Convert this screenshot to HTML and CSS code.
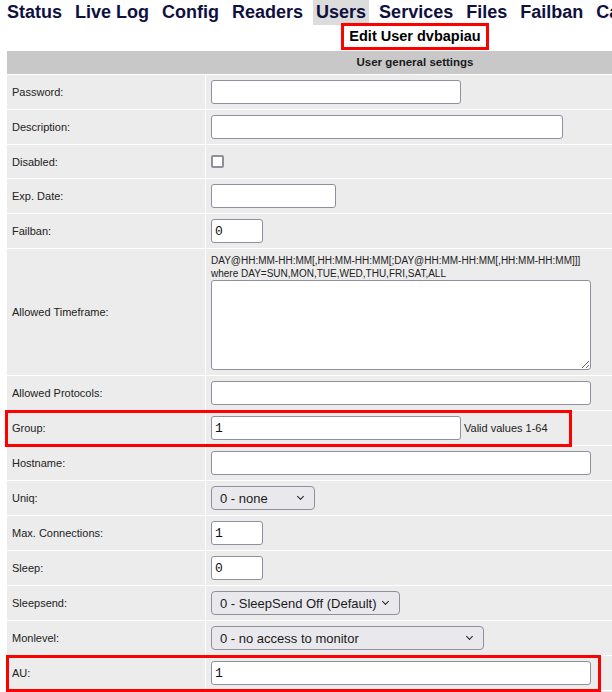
FILE: index.html
```html
<!DOCTYPE html>
<html lang="en">

<head>
    <meta charset="UTF-8">
    <meta name="viewport" content="width=device-width, initial-scale=1.0">
    <title>OSCam - Edit User</title>
    <link rel="stylesheet" href="styles.css">
</head>

<body>

    <ul id="menu">
        <li><a href="#">Status</a></li>
        <li><a href="#">Live Log</a></li>
        <li><a href="#">Config</a></li>
        <li><a href="#">Readers</a></li>
        <li class="active"><a href="#">Users</a></li>
        <li><a href="#">Services</a></li>
        <li><a href="#">Files</a></li>
        <li><a href="#">Failban</a></li>
        <li><a href="#">Cache</a></li>
        <li><a href="#">Script</a></li>
        <li><a href="#">Shutdown</a></li>
    </ul>

    <div class="page">
        <div class="title"><span>Edit User dvbapiau</span></div>

        <div class="config">
            <div class="head">User general settings</div>

            <div class="row">
                <div class="label">Password:</div>
                <div class="field"><input type="text" class="w250"></div>
            </div>
            <div class="row">
                <div class="label">Description:</div>
                <div class="field"><input type="text" class="w352"></div>
            </div>
            <div class="row short">
                <div class="label">Disabled:</div>
                <div class="field"><input type="checkbox"></div>
            </div>
            <div class="row">
                <div class="label">Exp. Date:</div>
                <div class="field"><input type="text" class="w125"></div>
            </div>
            <div class="row">
                <div class="label">Failban:</div>
                <div class="field"><input type="text" class="w52" value="0"></div>
            </div>
            <div class="row">
                <div class="label">Allowed Timeframe:</div>
                <div class="field stack">
                    <div class="hint">DAY@HH:MM-HH:MM[,HH:MM-HH:MM[;DAY@HH:MM-HH:MM[,HH:MM-HH:MM]]]<br>where DAY=SUN,MON,TUE,WED,THU,FRI,SAT,ALL</div>
                    <textarea></textarea>
                </div>
            </div>
            <div class="row">
                <div class="label">Allowed Protocols:</div>
                <div class="field"><input type="text" class="w380"></div>
            </div>
            <div class="row marked group">
                <div class="label">Group:</div>
                <div class="field"><input type="text" class="w250" value="1"><span class="note">Valid values 1-64</span></div>
            </div>
            <div class="row">
                <div class="label">Hostname:</div>
                <div class="field"><input type="text" class="w380"></div>
            </div>
            <div class="row">
                <div class="label">Uniq:</div>
                <div class="field">
                    <span class="sel"><select class="w104">
                        <option>0 - none</option>
                        <option>1 - strict first</option>
                        <option>2 - per IP</option>
                    </select></span>
                </div>
            </div>
            <div class="row">
                <div class="label">Max. Connections:</div>
                <div class="field"><input type="text" class="w52" value="1"></div>
            </div>
            <div class="row">
                <div class="label">Sleep:</div>
                <div class="field"><input type="text" class="w52" value="0"></div>
            </div>
            <div class="row">
                <div class="label">Sleepsend:</div>
                <div class="field">
                    <span class="sel"><select class="w189">
                        <option>0 - SleepSend Off (Default)</option>
                        <option>255 - SleepSend On</option>
                    </select></span>
                </div>
            </div>
            <div class="row">
                <div class="label">Monlevel:</div>
                <div class="field">
                    <span class="sel"><select class="w273">
                        <option>0 - no access to monitor</option>
                        <option>1 - only server and own procs</option>
                        <option>2 - all procs, but viewing only</option>
                    </select></span>
                </div>
            </div>
            <div class="row marked au">
                <div class="label">AU:</div>
                <div class="field"><input type="text" class="w380" value="1"></div>
            </div>
            <div class="row">
                <div class="label">AU Low:</div>
                <div class="field"><input type="checkbox"></div>
            </div>
        </div>
    </div>

</body>

</html>
```

FILE: styles.css
```css
body {
    margin: 0;
    padding: 0;
    font-family: "Liberation Sans", Arial, sans-serif;
    color: #222;
    background: #fff;
    overflow: hidden;
}

/* top menu */
#menu {
    display: flex;
    gap: 7px;
    margin: 0;
    padding: 0 0 0 4px;
    list-style: none;
    white-space: nowrap;
}

#menu a {
    display: block;
    padding: 0 3px 1px;
    line-height: 24px;
    font-size: 18px;
    font-weight: bold;
    color: #10103f;
    text-decoration: none;
}

#menu .active a {
    background: #dcdcdc;
}

.page {
    padding-left: 7px;
    width: 816px;
}

.title {
    text-align: center;
    margin-top: -2px;
    height: 28px;
}

.title span {
    display: inline-block;
    border: 3px solid #f00;
    padding: 0 5px;
    line-height: 21px;
    font-size: 14.5px;
    font-weight: bold;
    color: #000;
}

/* settings table */
.config {
    display: flex;
    flex-direction: column;
    gap: 1px;
    width: 816px;
}

.head {
    height: 23px;
    line-height: 23px;
    background: #c8c8c8;
    text-align: center;
    font-size: 11.5px;
    font-weight: bold;
    color: #1a1a1a;
}

.row {
    display: grid;
    grid-template-columns: 198px 1fr;
    column-gap: 1px;
    min-height: 34px;
}

.row.short {
    min-height: 33px;
}

.label,
.field {
    display: flex;
    align-items: center;
    background: #ececec;
    padding: 0 5px;
    font-size: 11px;
}

.field.stack {
    flex-direction: column;
    align-items: flex-start;
    padding: 5px 5px 5px;
}

.hint {
    font-size: 10px;
    line-height: 13px;
}

.note {
    margin-left: 3px;
    font-size: 11px;
}

input[type="text"],
textarea {
    box-sizing: border-box;
    height: 24px;
    margin: 0;
    padding: 0 3px;
    border: 1px solid #8f8f9d;
    border-radius: 3px;
    background: #fff;
    font-family: "Liberation Mono", "DejaVu Sans Mono", monospace;
    font-size: 13px;
    color: #111;
}

textarea {
    width: 380px;
    height: 90px;
}

input[type="checkbox"] {
    -webkit-appearance: none;
    appearance: none;
    box-sizing: border-box;
    width: 13px;
    height: 13px;
    margin: 0;
    border: 2px solid #8f8f9d;
    border-radius: 2px;
    background: #fff;
}

/* selects with a drawn chevron */
.sel {
    position: relative;
    display: inline-block;
}

.sel::after {
    content: "";
    position: absolute;
    right: 12px;
    top: 8px;
    width: 4px;
    height: 4px;
    border-right: 1.5px solid #222;
    border-bottom: 1.5px solid #222;
    transform: rotate(45deg);
    pointer-events: none;
}

select {
    -webkit-appearance: none;
    appearance: none;
    box-sizing: border-box;
    height: 24px;
    margin: 0;
    padding: 0 20px 0 8px;
    border: 1px solid #8f8f9d;
    border-radius: 4px;
    background: #e9e9ed;
    font-family: "Liberation Sans", Arial, sans-serif;
    font-size: 13px;
    color: #1a1a1a;
}

.w52 { width: 52px; }
.w104 { width: 104px; }
.w125 { width: 125px; }
.w189 { width: 189px; }
.w250 { width: 250px; }
.w273 { width: 273px; }
.w352 { width: 352px; }
.w380 { width: 380px; }

/* red highlight frames */
.marked {
    position: relative;
}

.marked::after {
    content: "";
    position: absolute;
    top: -1px;
    bottom: -2px;
    border: 3px solid #f00;
    pointer-events: none;
}

.group::after {
    left: -2px;
    width: 561px;
}

.au::after {
    left: -1px;
    width: 589px;
}
```
